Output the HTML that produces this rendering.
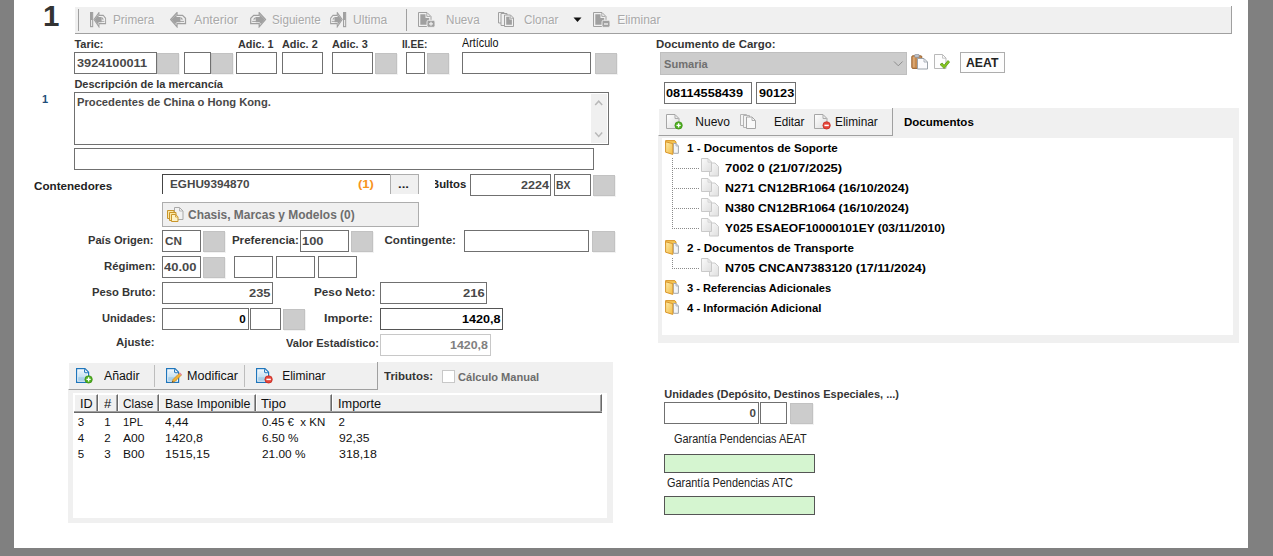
<!DOCTYPE html><html lang="es"><head><meta charset="utf-8"><title>Partida 1</title><style>

html,body{margin:0;padding:0}
body{width:1273px;height:556px;background:#808080;overflow:hidden;position:relative;font-family:"Liberation Sans",sans-serif;}
.a{position:absolute;box-sizing:border-box}
.t{position:absolute;white-space:pre;line-height:1;transform-origin:0 0;display:block}

</style></head><body>
<div class="a" style="left:14px;top:0px;width:1234px;height:548px;background:#fff;"></div>
<div class="a" style="left:75px;top:7px;width:1157px;height:27px;background:#f0f0f0;border-bottom:1px solid #a0a0a0;border-right:1px solid #a0a0a0;"></div>
<div class="a" style="left:1231px;top:6px;width:1px;height:2px;background:#a0a0a0;"></div>
<div class="a" style="left:78px;top:9px;width:1px;height:22px;background:#a0a0a0;"></div>
<div class="a" style="left:406px;top:9px;width:1px;height:22px;background:#a0a0a0;"></div>
<svg class="a" style="left:573px;top:17px" width="9" height="6" viewBox="0 0 9 6"><path d="M0.5 0.5h8l-4 4.5z" fill="#111"/></svg>
<svg class="a" style="left:90px;top:12px" width="17" height="16" viewBox="0 0 17 16"><rect x="0.5" y="0.5" width="2.2" height="14.2" fill="#a0a0a0" stroke="#a0a0a0" stroke-width="1"/><rect x="1.1" y="8" width="1" height="6" fill="#f0f0f0"/><g transform="translate(3.5,0) scale(0.78,1)"><path d="M0.7 7.5L7 0.6V3.4h5.5l3 2.9v5.2H7v3.3z" fill="#f0f0f0" stroke="#a0a0a0" stroke-width="1.25"/><path d="M1.4 7.5L6.4 2.4l.2 2.6h3.8v5.2H6.8L5.2 12z" fill="#a0a0a0"/><path d="M10.6 4.8l2.8 2.8h-2.8z" fill="#a0a0a0"/><path d="M8 9.4h6" stroke="#a0a0a0" stroke-width="1"/></g></svg>
<svg class="a" style="left:170px;top:12px" width="17" height="16" viewBox="0 0 17 16"><path d="M0.7 7.5L7 0.6V3.4h5.5l3 2.9v5.2H7v3.3z" fill="#f0f0f0" stroke="#a0a0a0" stroke-width="1.25"/><path d="M1.4 7.5L6.4 2.4l.2 2.6h3.8v5.2H6.8L5.2 12z" fill="#a0a0a0"/><path d="M10.6 4.8l2.8 2.8h-2.8z" fill="#a0a0a0"/><path d="M8 9.4h6" stroke="#a0a0a0" stroke-width="1"/></svg>
<svg class="a" style="left:249.6px;top:12px" width="17" height="16" viewBox="0 0 17 16"><g transform="translate(16.2,0) scale(-1,1)"><path d="M0.7 7.5L7 0.6V3.4h5.5l3 2.9v5.2H7v3.3z" fill="#f0f0f0" stroke="#a0a0a0" stroke-width="1.25"/><path d="M1.4 7.5L6.4 2.4l.2 2.6h3.8v5.2H6.8L5.2 12z" fill="#a0a0a0"/><path d="M10.6 4.8l2.8 2.8h-2.8z" fill="#a0a0a0"/><path d="M8 9.4h6" stroke="#a0a0a0" stroke-width="1"/></g></svg>
<svg class="a" style="left:330px;top:12px" width="17" height="16" viewBox="0 0 17 16"><g transform="translate(16.2,0) scale(-1,1)"><rect x="0.5" y="0.5" width="2.2" height="14.2" fill="#a0a0a0" stroke="#a0a0a0" stroke-width="1"/><rect x="1.1" y="8" width="1" height="6" fill="#f0f0f0"/><g transform="translate(3.5,0) scale(0.78,1)"><path d="M0.7 7.5L7 0.6V3.4h5.5l3 2.9v5.2H7v3.3z" fill="#f0f0f0" stroke="#a0a0a0" stroke-width="1.25"/><path d="M1.4 7.5L6.4 2.4l.2 2.6h3.8v5.2H6.8L5.2 12z" fill="#a0a0a0"/><path d="M10.6 4.8l2.8 2.8h-2.8z" fill="#a0a0a0"/><path d="M8 9.4h6" stroke="#a0a0a0" stroke-width="1"/></g></g></svg>
<svg class="a" style="left:418px;top:12px" width="18" height="16" viewBox="0 0 18 16"><path d="M0.5 0.5h8.5l4 4v10h-12.5z" fill="#f0f0f0" stroke="#a0a0a0"/><path d="M2.3 2.3h5.2v3.7h3.7v6.7h-8.9z" fill="#a0a0a0"/><path d="M8.8 1v3.4h3.6" fill="none" stroke="#a0a0a0" stroke-width=".9"/><rect x="9" y="8.3" width="8" height="7" rx="1.6" fill="#a0a0a0" stroke="#f0f0f0" stroke-width=".9"/><path d="M11 11.8h4M13 9.8v4" stroke="#f0f0f0" stroke-width="1.2"/></svg>
<svg class="a" style="left:593px;top:12px" width="18" height="16" viewBox="0 0 18 16"><path d="M0.5 0.5h8.5l4 4v10h-12.5z" fill="#f0f0f0" stroke="#a0a0a0"/><path d="M2.3 2.3h5.2v3.7h3.7v6.7h-8.9z" fill="#a0a0a0"/><path d="M8.8 1v3.4h3.6" fill="none" stroke="#a0a0a0" stroke-width=".9"/><rect x="9" y="8.3" width="8" height="7" rx="1.6" fill="#a0a0a0" stroke="#f0f0f0" stroke-width=".9"/><path d="M11 12h4" stroke="#f0f0f0" stroke-width="1.4"/></svg>
<svg class="a" style="left:498px;top:12px" width="17" height="16" viewBox="0 0 17 16"><path d="M0.5 0.5h5.5v10.5H0.5z" fill="#f0f0f0" stroke="#a0a0a0"/><path d="M3 1.5h6v12H3z" fill="#f0f0f0" stroke="#a0a0a0"/><path d="M6.5 3h6l3 3v8.5h-9z" fill="#f0f0f0" stroke="#a0a0a0"/><path d="M8.2 4.8h3.3v2.8h2.4v5.2H8.2z" fill="#a0a0a0"/><path d="M12.2 3.4v2.9h3" fill="none" stroke="#a0a0a0" stroke-width=".8"/></svg>
<div class="a" style="left:74px;top:52px;width:83px;height:22px;background:#fff;border:1px solid #707070;"></div>
<div class="a" style="left:157px;top:53px;width:22px;height:21px;background:#cccccc;border:1px solid #c2c2c2;box-shadow:1px 1px 0 #f2f2f2;"></div>
<div class="a" style="left:184px;top:52px;width:27px;height:22px;background:#fff;border:1px solid #707070;"></div>
<div class="a" style="left:211px;top:53px;width:22px;height:21px;background:#cccccc;border:1px solid #c2c2c2;box-shadow:1px 1px 0 #f2f2f2;"></div>
<div class="a" style="left:236px;top:52px;width:41px;height:22px;background:#fff;border:1px solid #707070;"></div>
<div class="a" style="left:282px;top:52px;width:41px;height:22px;background:#fff;border:1px solid #707070;"></div>
<div class="a" style="left:332px;top:52px;width:41px;height:22px;background:#fff;border:1px solid #707070;"></div>
<div class="a" style="left:375px;top:53px;width:22px;height:21px;background:#cccccc;border:1px solid #c2c2c2;box-shadow:1px 1px 0 #f2f2f2;"></div>
<div class="a" style="left:406px;top:52px;width:19px;height:22px;background:#fff;border:1px solid #707070;"></div>
<div class="a" style="left:427px;top:53px;width:22px;height:21px;background:#cccccc;border:1px solid #c2c2c2;box-shadow:1px 1px 0 #f2f2f2;"></div>
<div class="a" style="left:462px;top:52px;width:129px;height:22px;background:#fff;border:1px solid #707070;"></div>
<div class="a" style="left:595px;top:53px;width:22px;height:21px;background:#cccccc;border:1px solid #c2c2c2;box-shadow:1px 1px 0 #f2f2f2;"></div>
<div class="a" style="left:74px;top:92px;width:535px;height:53px;background:#fff;border:1px solid #707070;"></div>
<div class="a" style="left:591px;top:94px;width:16px;height:49px;background:#f0f0f0;"></div>
<svg class="a" style="left:594px;top:99px" width="10" height="8" viewBox="0 0 10 8"><path d="M1.2 6l3.5-3.8 3.5 3.8" fill="none" stroke="#b8b8b8" stroke-width="1.5"/></svg>
<svg class="a" style="left:594px;top:131px" width="10" height="8" viewBox="0 0 10 8"><path d="M1.2 1.6l3.5 3.8 3.5-3.8" fill="none" stroke="#b8b8b8" stroke-width="1.5"/></svg>
<div class="a" style="left:74px;top:148px;width:520px;height:22px;background:#fff;border:1px solid #707070;"></div>
<div class="a" style="left:162px;top:174px;width:229px;height:20px;background:#fff;border-top:1px solid #444;border-left:1px solid #444;"></div>
<div class="a" style="left:390px;top:174px;width:29px;height:20px;background:#f0f0f0;border:1px solid #adadad;border-bottom:none;"></div>
<div class="a" style="left:470px;top:174px;width:81px;height:22px;background:#fff;border:1px solid #707070;"></div>
<div class="a" style="left:554px;top:174px;width:37px;height:22px;background:#fff;border:1px solid #707070;"></div>
<div class="a" style="left:593px;top:175px;width:22px;height:21px;background:#cccccc;border:1px solid #c2c2c2;box-shadow:1px 1px 0 #f2f2f2;"></div>
<div class="a" style="left:162px;top:202px;width:257px;height:25px;background:#f0f0f0;border:1px solid #adadad;"></div>
<svg class="a" style="left:167px;top:207px" width="17" height="16" viewBox="0 0 17 16"><path d="M7.5 0.5h5l3.5 3.5v8.5h-8.5z" fill="#f2f2f2" stroke="#a8a8a8"/><path d="M12.5 0.8v3.2h3.2" fill="none" stroke="#a8a8a8" stroke-width=".8"/><path d="M0.5 3.5h6.5v8h-6.5z" fill="#fbe7a4" stroke="#c9952b"/><path d="M2.5 5.5h6.5v8h-6.5z" fill="#fbe7a4" stroke="#c9952b"/><path d="M4.5 7.5h4.2l2.3 2.3v4.7h-6.5z" fill="#fdf2c6" stroke="#c9952b"/><path d="M8.5 7.8v2.2h2.2" fill="none" stroke="#c9952b" stroke-width=".8"/></svg>
<div class="a" style="left:162px;top:230px;width:39px;height:22px;background:#fff;border:1px solid #707070;"></div>
<div class="a" style="left:203px;top:231px;width:22px;height:21px;background:#cccccc;border:1px solid #c2c2c2;box-shadow:1px 1px 0 #f2f2f2;"></div>
<div class="a" style="left:300px;top:230px;width:49px;height:22px;background:#fff;border:1px solid #707070;"></div>
<div class="a" style="left:351px;top:231px;width:22px;height:21px;background:#cccccc;border:1px solid #c2c2c2;box-shadow:1px 1px 0 #f2f2f2;"></div>
<div class="a" style="left:464px;top:230px;width:125px;height:22px;background:#fff;border:1px solid #707070;"></div>
<div class="a" style="left:592px;top:231px;width:23px;height:21px;background:#cccccc;border:1px solid #c2c2c2;box-shadow:1px 1px 0 #f2f2f2;"></div>
<div class="a" style="left:162px;top:256px;width:39px;height:22px;background:#fff;border:1px solid #707070;"></div>
<div class="a" style="left:203px;top:257px;width:22px;height:21px;background:#cccccc;border:1px solid #c2c2c2;box-shadow:1px 1px 0 #f2f2f2;"></div>
<div class="a" style="left:234px;top:256px;width:39px;height:22px;background:#fff;border:1px solid #707070;"></div>
<div class="a" style="left:276px;top:256px;width:39px;height:22px;background:#fff;border:1px solid #707070;"></div>
<div class="a" style="left:318px;top:256px;width:39px;height:22px;background:#fff;border:1px solid #707070;"></div>
<div class="a" style="left:162px;top:282px;width:111px;height:22px;background:#fff;border:1px solid #707070;"></div>
<div class="a" style="left:380px;top:282px;width:107px;height:22px;background:#fff;border:1px solid #707070;"></div>
<div class="a" style="left:162px;top:308px;width:87px;height:22px;background:#fff;border:1px solid #707070;"></div>
<div class="a" style="left:250px;top:308px;width:31px;height:22px;background:#fff;border:1px solid #707070;"></div>
<div class="a" style="left:283px;top:309px;width:22px;height:21px;background:#cccccc;border:1px solid #c2c2c2;box-shadow:1px 1px 0 #f2f2f2;"></div>
<div class="a" style="left:380px;top:308px;width:123px;height:22px;background:#fff;border:1px solid #555;"></div>
<div class="a" style="left:380px;top:334px;width:111px;height:22px;background:#fff;border:1px solid #c8c8c8;"></div>
<div class="a" style="left:68px;top:362px;width:545px;height:161px;background:#f0f0f0;"></div>
<div class="a" style="left:68px;top:362px;width:310px;height:28px;background:#f0f0f0;border-bottom:1px solid #a0a0a0;border-right:1px solid #a0a0a0;border-top:1px solid #fff;border-left:1px solid #fff;"></div>
<div class="a" style="left:377px;top:362px;width:1px;height:1px;background:#a0a0a0;"></div>
<div class="a" style="left:154px;top:365px;width:1px;height:22px;background:#bdbdbd;"></div>
<div class="a" style="left:244px;top:365px;width:1px;height:22px;background:#bdbdbd;"></div>
<div class="a" style="left:442px;top:370px;width:13px;height:13px;background:#fff;border:1px solid #c8c8c8;"></div>
<svg class="a" style="left:76px;top:368px" width="17" height="16" viewBox="0 0 17 16"><defs><linearGradient id="gp" x1="0" y1="0" x2="0" y2="1"><stop offset="0" stop-color="#eaf4fb"/><stop offset="1" stop-color="#b5d8ee"/></linearGradient></defs><path d="M0.6 0.6h8.4l3.6 3.6v10.2h-12z" fill="#fff" stroke="#1f76bc" stroke-width="1.2"/><path d="M2.2 2.2h5.6v3h3.2v7.6h-8.8z" fill="url(#gp)"/><path d="M2.2 9.2h8.8v3.6h-8.8z" fill="#9fcbe6" opacity=".7"/><path d="M8.6 1.2v2.6q.2 1 1.2 1h2.4" fill="none" stroke="#1f76bc" stroke-width="1.1"/><circle cx="12.6" cy="11.4" r="3.7" fill="#4fb020" stroke="#3a8c14" stroke-width=".7"/><path d="M10.5 11.4h4.2M12.6 9.3v4.2" stroke="#fff" stroke-width="1.4"/></svg>
<svg class="a" style="left:166px;top:368px" width="17" height="16" viewBox="0 0 17 16"><defs><linearGradient id="ge" x1="0" y1="0" x2="0" y2="1"><stop offset="0" stop-color="#eaf4fb"/><stop offset="1" stop-color="#b5d8ee"/></linearGradient></defs><path d="M0.6 0.6h8.4l3.6 3.6v10.2h-12z" fill="#fff" stroke="#1f76bc" stroke-width="1.2"/><path d="M2.2 2.2h5.6v3h3.2v7.6h-8.8z" fill="url(#ge)"/><path d="M2.2 9.2h8.8v3.6h-8.8z" fill="#9fcbe6" opacity=".7"/><path d="M8.6 1.2v2.6q.2 1 1.2 1h2.4" fill="none" stroke="#1f76bc" stroke-width="1.1"/><path d="M6 14.5l1-3 6.5-6.5 2 2-6.5 6.5z" fill="#f2b233" stroke="#b9791a" stroke-width=".6"/><path d="M13 5.5l1-1 2 2-1 1z" fill="#e58aa5"/><path d="M6 14.5l.5-1.6 1.1 1.1z" fill="#333"/></svg>
<svg class="a" style="left:256px;top:368px" width="17" height="16" viewBox="0 0 17 16"><defs><linearGradient id="gm" x1="0" y1="0" x2="0" y2="1"><stop offset="0" stop-color="#eaf4fb"/><stop offset="1" stop-color="#b5d8ee"/></linearGradient></defs><path d="M0.6 0.6h8.4l3.6 3.6v10.2h-12z" fill="#fff" stroke="#1f76bc" stroke-width="1.2"/><path d="M2.2 2.2h5.6v3h3.2v7.6h-8.8z" fill="url(#gm)"/><path d="M2.2 9.2h8.8v3.6h-8.8z" fill="#9fcbe6" opacity=".7"/><path d="M8.6 1.2v2.6q.2 1 1.2 1h2.4" fill="none" stroke="#1f76bc" stroke-width="1.1"/><circle cx="12.6" cy="11.4" r="3.7" fill="#e5453a" stroke="#c0271d" stroke-width=".7"/><path d="M10.4 11.4h4.4" stroke="#fff" stroke-width="1.5"/></svg>
<div class="a" style="left:73px;top:393px;width:534px;height:125px;background:#fff;"></div>
<div class="a" style="left:74px;top:394px;width:24px;height:19px;background:#f0f0f0;border-right:1px solid #696969;border-bottom:1px solid #696969;border-left:1px solid #fff;border-top:1px solid #fff;box-shadow:inset -1px -1px 0 #a0a0a0;"></div>
<div class="a" style="left:98px;top:394px;width:20px;height:19px;background:#f0f0f0;border-right:1px solid #696969;border-bottom:1px solid #696969;border-left:1px solid #fff;border-top:1px solid #fff;box-shadow:inset -1px -1px 0 #a0a0a0;"></div>
<div class="a" style="left:118px;top:394px;width:41px;height:19px;background:#f0f0f0;border-right:1px solid #696969;border-bottom:1px solid #696969;border-left:1px solid #fff;border-top:1px solid #fff;box-shadow:inset -1px -1px 0 #a0a0a0;"></div>
<div class="a" style="left:159px;top:394px;width:97px;height:19px;background:#f0f0f0;border-right:1px solid #696969;border-bottom:1px solid #696969;border-left:1px solid #fff;border-top:1px solid #fff;box-shadow:inset -1px -1px 0 #a0a0a0;"></div>
<div class="a" style="left:256px;top:394px;width:76px;height:19px;background:#f0f0f0;border-right:1px solid #696969;border-bottom:1px solid #696969;border-left:1px solid #fff;border-top:1px solid #fff;box-shadow:inset -1px -1px 0 #a0a0a0;"></div>
<div class="a" style="left:332px;top:394px;width:270px;height:19px;background:#f0f0f0;border-right:1px solid #696969;border-bottom:1px solid #696969;border-left:1px solid #fff;border-top:1px solid #fff;box-shadow:inset -1px -1px 0 #a0a0a0;"></div>
<div class="a" style="left:74px;top:411px;width:528px;height:1px;background:#a0a0a0;"></div>
<div class="a" style="left:74px;top:412px;width:528px;height:1px;background:#696969;"></div>
<div class="a" style="left:660px;top:52px;width:247px;height:23px;background:#cccccc;border:1px solid #bfbfbf;"></div>
<svg class="a" style="left:893px;top:60px" width="11" height="8" viewBox="0 0 11 8"><path d="M1 1.5l4.3 4.3 4.3-4.3" fill="none" stroke="#8d8d8d" stroke-width="1"/></svg>
<svg class="a" style="left:911px;top:54px" width="18" height="16" viewBox="0 0 18 16"><rect x="0.8" y="1.8" width="10" height="12.6" rx="1" fill="#c58a50" stroke="#9a6330"/><rect x="1.8" y="2.8" width="2" height="10.6" fill="#dba772"/><rect x="3.6" y="0.4" width="4.6" height="3" rx="1" fill="#bfc3ca" stroke="#858a93" stroke-width=".7"/><path d="M6.5 4.5h6.5l3.5 3.5v7h-10z" fill="#fbfbfd" stroke="#9aa1a9"/><path d="M13 4.8v3.2h3.2" fill="none" stroke="#9aa1a9" stroke-width=".8"/></svg>
<svg class="a" style="left:934px;top:54px" width="16" height="16" viewBox="0 0 16 16"><path d="M0.5 0.5h8l3.5 3.5v10.5h-11.5z" fill="#fdfdfd" stroke="#b9b9b9"/><path d="M8.5 0.8v3.4h3.4" fill="none" stroke="#b9b9b9" stroke-width=".8"/><path d="M6 10.5l2.2-1.5 1.8 2.3 4-4.8 1.6 1.6-5.4 6.4z" fill="#86c61e" stroke="#4f8f0e" stroke-width=".7"/></svg>
<div class="a" style="left:960px;top:52px;width:45px;height:21px;background:#fdfdfd;border:1px solid #adadad;"></div>
<div class="a" style="left:664px;top:82px;width:88px;height:22px;background:#fff;border:1px solid #707070;"></div>
<div class="a" style="left:756px;top:82px;width:40px;height:22px;background:#fff;border:1px solid #707070;"></div>
<div class="a" style="left:658px;top:108px;width:581px;height:235px;background:#f0f0f0;"></div>
<div class="a" style="left:658px;top:108px;width:235px;height:28px;background:#f0f0f0;border-bottom:1px solid #a0a0a0;border-right:1px solid #a0a0a0;border-top:1px solid #fff;border-left:1px solid #fff;"></div>
<div class="a" style="left:892px;top:108px;width:1px;height:1px;background:#a0a0a0;"></div>
<div class="a" style="left:662px;top:138px;width:571px;height:197px;background:#fff;"></div>
<svg class="a" style="left:666px;top:114px" width="17" height="16" viewBox="0 0 17 16"><defs><linearGradient id="wP" x1="0" y1="0" x2="1" y2="1"><stop offset="0" stop-color="#fff"/><stop offset="1" stop-color="#dcdcdc"/></linearGradient></defs><path d="M0.5 0.5h8.5l4 4v10h-12.5z" fill="url(#wP)" stroke="#a6a6a6"/><path d="M9 0.8v3.7h3.7" fill="none" stroke="#a6a6a6" stroke-width=".9"/><circle cx="12.6" cy="11.4" r="3.7" fill="#4fb020" stroke="#3a8c14" stroke-width=".7"/><path d="M10.5 11.4h4.2M12.6 9.3v4.2" stroke="#fff" stroke-width="1.4"/></svg>
<svg class="a" style="left:814px;top:114px" width="17" height="16" viewBox="0 0 17 16"><defs><linearGradient id="wM" x1="0" y1="0" x2="1" y2="1"><stop offset="0" stop-color="#fff"/><stop offset="1" stop-color="#dcdcdc"/></linearGradient></defs><path d="M0.5 0.5h8.5l4 4v10h-12.5z" fill="url(#wM)" stroke="#a6a6a6"/><path d="M9 0.8v3.7h3.7" fill="none" stroke="#a6a6a6" stroke-width=".9"/><circle cx="12.6" cy="11.4" r="3.7" fill="#e5453a" stroke="#c0271d" stroke-width=".7"/><path d="M10.4 11.4h4.4" stroke="#fff" stroke-width="1.5"/></svg>
<svg class="a" style="left:740px;top:114px" width="17" height="15" viewBox="0 0 17 15"><path d="M0.5 0.5h6v11h-6z" fill="#f4f4f4" stroke="#b4b4b4"/><path d="M3.5 1.5h6v12h-6z" fill="#f4f4f4" stroke="#b4b4b4"/><path d="M6.5 3h5.5l3.5 3.5v8h-9z" fill="#f9f9f9" stroke="#a6a6a6"/><path d="M12 3.3v3.2h3.2" fill="none" stroke="#a6a6a6" stroke-width=".9"/></svg>
<svg class="a" style="left:665px;top:140px" width="15" height="16" viewBox="0 0 15 16"><defs><linearGradient id="f140" x1="0" y1="0" x2="1" y2="1"><stop offset="0" stop-color="#fdeaa8"/><stop offset="1" stop-color="#f3bd45"/></linearGradient></defs><path d="M0.6 0.6h9.2l1.2 1.4v3H0.6z" fill="#f3c556" stroke="#d9962b"/><path d="M8.4 3.5h2.6l2.4 2.4v7.4H8.4z" fill="#f3f5f9" stroke="#a4a9b0"/><path d="M11 3.8v2.2h2.2" fill="none" stroke="#a4a9b0" stroke-width=".8"/><path d="M0.6 1.8L7.8 3.6V14.4L0.6 12.2z" fill="url(#f140)" stroke="#d9962b"/></svg>
<svg class="a" style="left:701px;top:158px" width="19" height="20" viewBox="0 0 19 20"><defs><linearGradient id="d158" x1="0" y1="0" x2="1" y2="1"><stop offset="0" stop-color="#fbfbfb"/><stop offset="1" stop-color="#dedede"/></linearGradient></defs><path d="M8.5 5h5.5l3.5 3.5v9.5h-9z" fill="url(#d158)" stroke="#cacaca"/><path d="M0.5 0.5h6.5l3.5 3.5v9.5h-10z" fill="url(#d158)" stroke="#c9c9c9"/><path d="M7 0.8v3.4h3.4" fill="none" stroke="#d0d0d0" stroke-width=".9"/></svg>
<div class="a" style="left:674px;top:168px;width:25px;height:1px;background-image:linear-gradient(to right,#8a8a8a 50%,transparent 50%);background-size:2px 1px;"></div>
<svg class="a" style="left:701px;top:178px" width="19" height="20" viewBox="0 0 19 20"><defs><linearGradient id="d178" x1="0" y1="0" x2="1" y2="1"><stop offset="0" stop-color="#fbfbfb"/><stop offset="1" stop-color="#dedede"/></linearGradient></defs><path d="M8.5 5h5.5l3.5 3.5v9.5h-9z" fill="url(#d178)" stroke="#cacaca"/><path d="M0.5 0.5h6.5l3.5 3.5v9.5h-10z" fill="url(#d178)" stroke="#c9c9c9"/><path d="M7 0.8v3.4h3.4" fill="none" stroke="#d0d0d0" stroke-width=".9"/></svg>
<div class="a" style="left:674px;top:188px;width:25px;height:1px;background-image:linear-gradient(to right,#8a8a8a 50%,transparent 50%);background-size:2px 1px;"></div>
<svg class="a" style="left:701px;top:198px" width="19" height="20" viewBox="0 0 19 20"><defs><linearGradient id="d198" x1="0" y1="0" x2="1" y2="1"><stop offset="0" stop-color="#fbfbfb"/><stop offset="1" stop-color="#dedede"/></linearGradient></defs><path d="M8.5 5h5.5l3.5 3.5v9.5h-9z" fill="url(#d198)" stroke="#cacaca"/><path d="M0.5 0.5h6.5l3.5 3.5v9.5h-10z" fill="url(#d198)" stroke="#c9c9c9"/><path d="M7 0.8v3.4h3.4" fill="none" stroke="#d0d0d0" stroke-width=".9"/></svg>
<div class="a" style="left:674px;top:208px;width:25px;height:1px;background-image:linear-gradient(to right,#8a8a8a 50%,transparent 50%);background-size:2px 1px;"></div>
<svg class="a" style="left:701px;top:218px" width="19" height="20" viewBox="0 0 19 20"><defs><linearGradient id="d218" x1="0" y1="0" x2="1" y2="1"><stop offset="0" stop-color="#fbfbfb"/><stop offset="1" stop-color="#dedede"/></linearGradient></defs><path d="M8.5 5h5.5l3.5 3.5v9.5h-9z" fill="url(#d218)" stroke="#cacaca"/><path d="M0.5 0.5h6.5l3.5 3.5v9.5h-10z" fill="url(#d218)" stroke="#c9c9c9"/><path d="M7 0.8v3.4h3.4" fill="none" stroke="#d0d0d0" stroke-width=".9"/></svg>
<div class="a" style="left:674px;top:228px;width:25px;height:1px;background-image:linear-gradient(to right,#8a8a8a 50%,transparent 50%);background-size:2px 1px;"></div>
<div class="a" style="left:672px;top:158px;width:1px;height:71px;background-image:linear-gradient(to bottom,#8a8a8a 50%,transparent 50%);background-size:1px 2px;"></div>
<svg class="a" style="left:665px;top:240px" width="15" height="16" viewBox="0 0 15 16"><defs><linearGradient id="f240" x1="0" y1="0" x2="1" y2="1"><stop offset="0" stop-color="#fdeaa8"/><stop offset="1" stop-color="#f3bd45"/></linearGradient></defs><path d="M0.6 0.6h9.2l1.2 1.4v3H0.6z" fill="#f3c556" stroke="#d9962b"/><path d="M8.4 3.5h2.6l2.4 2.4v7.4H8.4z" fill="#f3f5f9" stroke="#a4a9b0"/><path d="M11 3.8v2.2h2.2" fill="none" stroke="#a4a9b0" stroke-width=".8"/><path d="M0.6 1.8L7.8 3.6V14.4L0.6 12.2z" fill="url(#f240)" stroke="#d9962b"/></svg>
<svg class="a" style="left:701px;top:258px" width="19" height="20" viewBox="0 0 19 20"><defs><linearGradient id="d258" x1="0" y1="0" x2="1" y2="1"><stop offset="0" stop-color="#fbfbfb"/><stop offset="1" stop-color="#dedede"/></linearGradient></defs><path d="M8.5 5h5.5l3.5 3.5v9.5h-9z" fill="url(#d258)" stroke="#cacaca"/><path d="M0.5 0.5h6.5l3.5 3.5v9.5h-10z" fill="url(#d258)" stroke="#c9c9c9"/><path d="M7 0.8v3.4h3.4" fill="none" stroke="#d0d0d0" stroke-width=".9"/></svg>
<div class="a" style="left:674px;top:268px;width:25px;height:1px;background-image:linear-gradient(to right,#8a8a8a 50%,transparent 50%);background-size:2px 1px;"></div>
<div class="a" style="left:672px;top:258px;width:1px;height:11px;background-image:linear-gradient(to bottom,#8a8a8a 50%,transparent 50%);background-size:1px 2px;"></div>
<svg class="a" style="left:665px;top:280px" width="15" height="16" viewBox="0 0 15 16"><defs><linearGradient id="f280" x1="0" y1="0" x2="1" y2="1"><stop offset="0" stop-color="#fdeaa8"/><stop offset="1" stop-color="#f3bd45"/></linearGradient></defs><path d="M0.6 0.6h9.2l1.2 1.4v3H0.6z" fill="#f3c556" stroke="#d9962b"/><path d="M8.4 3.5h2.6l2.4 2.4v7.4H8.4z" fill="#f3f5f9" stroke="#a4a9b0"/><path d="M11 3.8v2.2h2.2" fill="none" stroke="#a4a9b0" stroke-width=".8"/><path d="M0.6 1.8L7.8 3.6V14.4L0.6 12.2z" fill="url(#f280)" stroke="#d9962b"/></svg>
<svg class="a" style="left:665px;top:300px" width="15" height="16" viewBox="0 0 15 16"><defs><linearGradient id="f300" x1="0" y1="0" x2="1" y2="1"><stop offset="0" stop-color="#fdeaa8"/><stop offset="1" stop-color="#f3bd45"/></linearGradient></defs><path d="M0.6 0.6h9.2l1.2 1.4v3H0.6z" fill="#f3c556" stroke="#d9962b"/><path d="M8.4 3.5h2.6l2.4 2.4v7.4H8.4z" fill="#f3f5f9" stroke="#a4a9b0"/><path d="M11 3.8v2.2h2.2" fill="none" stroke="#a4a9b0" stroke-width=".8"/><path d="M0.6 1.8L7.8 3.6V14.4L0.6 12.2z" fill="url(#f300)" stroke="#d9962b"/></svg>
<div class="a" style="left:664px;top:402px;width:95px;height:22px;background:#fff;border:1px solid #707070;"></div>
<div class="a" style="left:760px;top:402px;width:27px;height:22px;background:#fff;border:1px solid #707070;"></div>
<div class="a" style="left:790px;top:403px;width:23px;height:21px;background:#cccccc;border:1px solid #c2c2c2;box-shadow:1px 1px 0 #f2f2f2;"></div>
<div class="a" style="left:664px;top:454px;width:151px;height:19px;background:#d5f5d0;border:1px solid #555;"></div>
<div class="a" style="left:664px;top:496px;width:151px;height:19px;background:#d5f5d0;border:1px solid #555;"></div>
<span class="t" style="left:43.0px;top:1.00px;font-size:29.5px;font-weight:700;color:#333;">1</span>
<span class="t" style="left:113.1px;top:14.00px;font-size:12px;font-weight:400;color:#a9a9a9;text-shadow:1px 1px 0 #fbfbfb;transform:scaleX(0.9806);">Primera</span>
<span class="t" style="left:193.6px;top:14.00px;font-size:12px;font-weight:400;color:#a9a9a9;text-shadow:1px 1px 0 #fbfbfb;transform:scaleX(1.0468);">Anterior</span>
<span class="t" style="left:271.5px;top:14.00px;font-size:12px;font-weight:400;color:#a9a9a9;text-shadow:1px 1px 0 #fbfbfb;transform:scaleX(0.9731);">Siguiente</span>
<span class="t" style="left:353.3px;top:14.00px;font-size:12px;font-weight:400;color:#a9a9a9;text-shadow:1px 1px 0 #fbfbfb;transform:scaleX(1.0084);">Ultima</span>
<span class="t" style="left:445.6px;top:14.00px;font-size:12px;font-weight:400;color:#a9a9a9;text-shadow:1px 1px 0 #fbfbfb;transform:scaleX(0.9686);">Nueva</span>
<span class="t" style="left:523.8px;top:14.00px;font-size:12px;font-weight:400;color:#a9a9a9;text-shadow:1px 1px 0 #fbfbfb;transform:scaleX(0.9729);">Clonar</span>
<span class="t" style="left:617.2px;top:14.00px;font-size:12px;font-weight:400;color:#a9a9a9;text-shadow:1px 1px 0 #fbfbfb;">Eliminar</span>
<span class="t" style="left:74.4px;top:39.00px;font-size:11px;font-weight:700;color:#353535;">Taric:</span>
<span class="t" style="left:237.9px;top:39.00px;font-size:11px;font-weight:700;color:#353535;transform:scaleX(0.9812);">Adic. 1</span>
<span class="t" style="left:281.9px;top:39.00px;font-size:11px;font-weight:700;color:#353535;transform:scaleX(0.9895);">Adic. 2</span>
<span class="t" style="left:332.2px;top:39.00px;font-size:11px;font-weight:700;color:#353535;transform:scaleX(0.9895);">Adic. 3</span>
<span class="t" style="left:402.1px;top:39.00px;font-size:11px;font-weight:700;color:#353535;transform:scaleX(0.9195);">II.EE:</span>
<span class="t" style="left:462.1px;top:37.30px;font-size:12px;font-weight:400;color:#111;transform:scaleX(0.8971);">Artículo</span>
<span class="t" style="left:77.0px;top:57.00px;font-size:11.6px;font-weight:700;color:#484848;transform:scaleX(1.0964);">3924100011</span>
<span class="t" style="left:74.4px;top:79.00px;font-size:11px;font-weight:700;color:#353535;">Descripción de la mercancía</span>
<span class="t" style="left:42.1px;top:94.00px;font-size:11px;font-weight:700;color:#1f4e79;">1</span>
<span class="t" style="left:76.9px;top:97.30px;font-size:11px;font-weight:700;color:#484848;transform:scaleX(1.0168);">Procedentes de China o Hong Kong.</span>
<span class="t" style="left:34.2px;top:179.70px;font-size:11.6px;font-weight:700;color:#222;transform:scaleX(1.0044);">Contenedores</span>
<span class="t" style="left:169.9px;top:177.90px;font-size:11.6px;font-weight:700;color:#484848;transform:scaleX(1.0109);">EGHU9394870</span>
<span class="t" style="left:357.5px;top:177.90px;font-size:11.6px;font-weight:700;color:#f7941d;transform:scaleX(1.1219);">(1)</span>
<span class="t" style="left:398.1px;top:177.50px;font-size:11.6px;font-weight:700;color:#222;transform:scaleX(1.1373);">...</span>
<div class="a" style="left:434.6px;top:178.00px;width:300px;height:15.1px;overflow:hidden"><span class="t" style="left:-3.50px;top:0;font-size:11.6px;font-weight:700;color:#222;transform:scaleX(0.9784);">Bultos</span></div>
<span class="t" style="left:521.4px;top:179.00px;font-size:11.6px;font-weight:700;color:#484848;transform:scaleX(1.0854);">2224</span>
<span class="t" style="left:556.1px;top:179.00px;font-size:11.6px;font-weight:700;color:#484848;transform:scaleX(0.9001);">BX</span>
<span class="t" style="left:187.9px;top:208.90px;font-size:12px;font-weight:700;color:#6d6d6d;transform:scaleX(0.9959);">Chasis, Marcas y Modelos (0)</span>
<span class="t" style="left:87.9px;top:233.90px;font-size:11.6px;font-weight:700;color:#353535;transform:scaleX(0.9590);">País Origen:</span>
<span class="t" style="left:164.5px;top:235.00px;font-size:11.6px;font-weight:700;color:#484848;transform:scaleX(1.0090);">CN</span>
<span class="t" style="left:231.9px;top:233.90px;font-size:11.6px;font-weight:700;color:#353535;">Preferencia:</span>
<span class="t" style="left:302.1px;top:235.00px;font-size:11.6px;font-weight:700;color:#484848;transform:scaleX(1.1115);">100</span>
<span class="t" style="left:384.5px;top:233.90px;font-size:11.6px;font-weight:700;color:#353535;">Contingente:</span>
<span class="t" style="left:104.3px;top:259.80px;font-size:11.6px;font-weight:700;color:#353535;transform:scaleX(0.9768);">Régimen:</span>
<span class="t" style="left:164.1px;top:261.00px;font-size:11.6px;font-weight:700;color:#484848;transform:scaleX(1.1201);">40.00</span>
<span class="t" style="left:92.2px;top:286.00px;font-size:11.6px;font-weight:700;color:#353535;transform:scaleX(0.9695);">Peso Bruto:</span>
<span class="t" style="left:249.1px;top:287.00px;font-size:11.6px;font-weight:700;color:#484848;transform:scaleX(1.1063);">235</span>
<span class="t" style="left:313.9px;top:286.00px;font-size:11.6px;font-weight:700;color:#353535;transform:scaleX(1.0122);">Peso Neto:</span>
<span class="t" style="left:463.1px;top:287.00px;font-size:11.6px;font-weight:700;color:#484848;transform:scaleX(1.1166);">216</span>
<span class="t" style="left:102.3px;top:312.00px;font-size:11.6px;font-weight:700;color:#353535;transform:scaleX(0.9563);">Unidades:</span>
<span class="t" style="left:239.3px;top:313.00px;font-size:11.6px;font-weight:700;color:#000;">0</span>
<span class="t" style="left:324.1px;top:312.00px;font-size:11.6px;font-weight:700;color:#353535;transform:scaleX(1.0544);">Importe:</span>
<span class="t" style="left:462.1px;top:313.00px;font-size:11.6px;font-weight:700;color:#000;transform:scaleX(1.0855);">1420,8</span>
<span class="t" style="left:116.1px;top:335.50px;font-size:11.6px;font-weight:700;color:#353535;transform:scaleX(0.9823);">Ajuste:</span>
<span class="t" style="left:286.1px;top:337.00px;font-size:11.6px;font-weight:700;color:#353535;transform:scaleX(0.9548);">Valor Estadístico:</span>
<span class="t" style="left:450.1px;top:339.00px;font-size:11.6px;font-weight:700;color:#808080;transform:scaleX(1.0685);">1420,8</span>
<span class="t" style="left:104.1px;top:369.70px;font-size:12px;font-weight:400;color:#111;transform:scaleX(1.0234);">Añadir</span>
<span class="t" style="left:187.0px;top:369.70px;font-size:12px;font-weight:400;color:#111;transform:scaleX(1.0475);">Modificar</span>
<span class="t" style="left:282.2px;top:369.70px;font-size:12px;font-weight:400;color:#111;">Eliminar</span>
<span class="t" style="left:383.9px;top:369.70px;font-size:11.6px;font-weight:700;color:#353535;transform:scaleX(0.9900);">Tributos:</span>
<span class="t" style="left:458.1px;top:370.50px;font-size:11.6px;font-weight:700;color:#6d6d6d;transform:scaleX(0.9548);">Cálculo Manual</span>
<span class="t" style="left:80.0px;top:398.00px;font-size:12px;font-weight:400;color:#111;transform:scaleX(1.0500);">ID</span>
<span class="t" style="left:103.6px;top:398.00px;font-size:12px;font-weight:400;color:#111;transform:scaleX(1.0916);">#</span>
<span class="t" style="left:122.8px;top:398.00px;font-size:12px;font-weight:400;color:#111;transform:scaleX(0.9874);">Clase</span>
<span class="t" style="left:164.7px;top:398.00px;font-size:12px;font-weight:400;color:#111;transform:scaleX(1.0336);">Base Imponible</span>
<span class="t" style="left:261.4px;top:398.00px;font-size:12px;font-weight:400;color:#111;transform:scaleX(1.0870);">Tipo</span>
<span class="t" style="left:338.2px;top:398.00px;font-size:12px;font-weight:400;color:#111;transform:scaleX(1.0618);">Importe</span>
<span class="t" style="left:77.8px;top:417.00px;font-size:11.5px;font-weight:400;color:#111;">3</span>
<span class="t" style="left:104.3px;top:417.00px;font-size:11.5px;font-weight:400;color:#111;">1</span>
<span class="t" style="left:123.1px;top:417.00px;font-size:11.5px;font-weight:400;color:#111;transform:scaleX(0.9771);">1PL</span>
<span class="t" style="left:165.0px;top:417.00px;font-size:11.5px;font-weight:400;color:#111;transform:scaleX(1.0540);">4,44</span>
<span class="t" style="left:262.0px;top:417.00px;font-size:11.5px;font-weight:400;color:#111;">0.45 €  x KN</span>
<span class="t" style="left:338.5px;top:417.00px;font-size:11.5px;font-weight:400;color:#111;">2</span>
<span class="t" style="left:77.8px;top:433.00px;font-size:11.5px;font-weight:400;color:#111;">4</span>
<span class="t" style="left:104.3px;top:433.00px;font-size:11.5px;font-weight:400;color:#111;">2</span>
<span class="t" style="left:123.1px;top:433.00px;font-size:11.5px;font-weight:400;color:#111;transform:scaleX(1.0504);">A00</span>
<span class="t" style="left:165.0px;top:433.00px;font-size:11.5px;font-weight:400;color:#111;transform:scaleX(1.0799);">1420,8</span>
<span class="t" style="left:262.0px;top:433.00px;font-size:11.5px;font-weight:400;color:#111;transform:scaleX(1.0192);">6.50 %</span>
<span class="t" style="left:338.5px;top:433.00px;font-size:11.5px;font-weight:400;color:#111;transform:scaleX(1.0562);">92,35</span>
<span class="t" style="left:77.8px;top:449.00px;font-size:11.5px;font-weight:400;color:#111;">5</span>
<span class="t" style="left:104.3px;top:449.00px;font-size:11.5px;font-weight:400;color:#111;">3</span>
<span class="t" style="left:123.1px;top:449.00px;font-size:11.5px;font-weight:400;color:#111;transform:scaleX(1.0504);">B00</span>
<span class="t" style="left:165.0px;top:449.00px;font-size:11.5px;font-weight:400;color:#111;transform:scaleX(1.0775);">1515,15</span>
<span class="t" style="left:262.0px;top:449.00px;font-size:11.5px;font-weight:400;color:#111;transform:scaleX(1.0307);">21.00 %</span>
<span class="t" style="left:338.5px;top:449.00px;font-size:11.5px;font-weight:400;color:#111;transform:scaleX(1.0771);">318,18</span>
<span class="t" style="left:656.1px;top:39.00px;font-size:11px;font-weight:700;color:#353535;transform:scaleX(1.0400);">Documento de Cargo:</span>
<span class="t" style="left:664.2px;top:58.20px;font-size:11.6px;font-weight:700;color:#707070;transform:scaleX(0.9571);">Sumaria</span>
<span class="t" style="left:966.1px;top:56.00px;font-size:13px;font-weight:700;color:#222;transform:scaleX(0.9437);">AEAT</span>
<span class="t" style="left:666.2px;top:86.90px;font-size:11.6px;font-weight:700;color:#000;transform:scaleX(1.0954);">08114558439</span>
<span class="t" style="left:759.2px;top:86.90px;font-size:11.6px;font-weight:700;color:#000;transform:scaleX(1.0915);">90123</span>
<span class="t" style="left:695.3px;top:116.00px;font-size:12px;font-weight:400;color:#111;">Nuevo</span>
<span class="t" style="left:774.1px;top:116.00px;font-size:12px;font-weight:400;color:#111;transform:scaleX(0.9726);">Editar</span>
<span class="t" style="left:835.4px;top:116.00px;font-size:12px;font-weight:400;color:#111;transform:scaleX(0.9875);">Eliminar</span>
<span class="t" style="left:903.8px;top:115.60px;font-size:11.6px;font-weight:700;color:#000;transform:scaleX(0.9940);">Documentos</span>
<span class="t" style="left:687.0px;top:142.00px;font-size:11.6px;font-weight:700;color:#000;">1 - Documentos de Soporte</span>
<span class="t" style="left:725.3px;top:162.00px;font-size:11.6px;font-weight:700;color:#000;transform:scaleX(1.1222);">7002 0 (21/07/2025)</span>
<span class="t" style="left:725.3px;top:182.00px;font-size:11.6px;font-weight:700;color:#000;transform:scaleX(1.0680);">N271 CN12BR1064 (16/10/2024)</span>
<span class="t" style="left:725.3px;top:202.00px;font-size:11.6px;font-weight:700;color:#000;transform:scaleX(1.0680);">N380 CN12BR1064 (16/10/2024)</span>
<span class="t" style="left:725.3px;top:222.00px;font-size:11.6px;font-weight:700;color:#000;transform:scaleX(1.0317);">Y025 ESAEOF10000101EY (03/11/2010)</span>
<span class="t" style="left:687.0px;top:242.00px;font-size:11.6px;font-weight:700;color:#000;">2 - Documentos de Transporte</span>
<span class="t" style="left:725.3px;top:262.00px;font-size:11.6px;font-weight:700;color:#000;transform:scaleX(1.0791);">N705 CNCAN7383120 (17/11/2024)</span>
<span class="t" style="left:687.0px;top:282.00px;font-size:11.6px;font-weight:700;color:#000;transform:scaleX(0.9590);">3 - Referencias Adicionales</span>
<span class="t" style="left:687.0px;top:302.00px;font-size:11.6px;font-weight:700;color:#000;transform:scaleX(0.9734);">4 - Información Adicional</span>
<span class="t" style="left:664.3px;top:389.00px;font-size:11px;font-weight:700;color:#353535;">Unidades (Depósito, Destinos Especiales, ...)</span>
<span class="t" style="left:749.6px;top:407.00px;font-size:11.6px;font-weight:700;color:#484848;">0</span>
<span class="t" style="left:673.5px;top:432.80px;font-size:12px;font-weight:400;color:#222;transform:scaleX(0.9090);">Garantía Pendencias AEAT</span>
<span class="t" style="left:667.1px;top:477.00px;font-size:12px;font-weight:400;color:#222;transform:scaleX(0.9095);">Garantía Pendencias ATC</span>
</body></html>
